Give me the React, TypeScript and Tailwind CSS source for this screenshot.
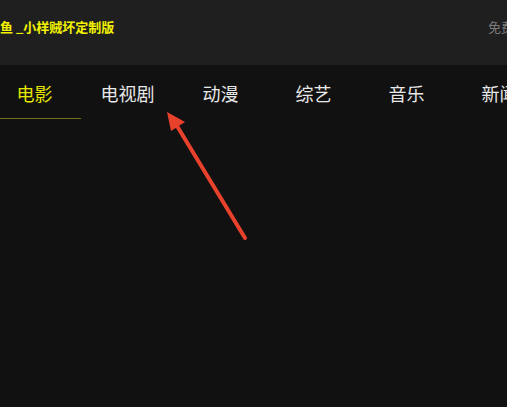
import React from "react";

const tabs = ["电影", "电视剧", "动漫", "综艺", "音乐", "新闻"];

export default function App() {
  return (
    <div
      className="relative w-[507px] h-[407px] overflow-hidden bg-[#111111]"
      style={{ fontFamily: '"Noto Sans CJK SC", "Noto Sans", sans-serif' }}
    >
      <div className="h-[65px] bg-[#1f1f1f] flex items-center justify-between pb-[12px]">
        <div className="text-[13px] font-bold text-[#f2f200] leading-none whitespace-nowrap">
          鱼 _小样贼坏定制版
        </div>
        <div className="text-[13px] text-[#7a7a7a] leading-none whitespace-nowrap mr-[-7px]">
          免费
        </div>
      </div>
      <div className="flex ml-[-12px]">
        {tabs.map((t, i) => (
          <div
            key={t}
            className={
              "shrink-0 w-[93px] h-[54px] flex items-center justify-center pt-[3px] text-[18px] whitespace-nowrap " +
              (i === 0
                ? "text-[#e6e600] border-b border-[#707018]"
                : "text-[#e8e8e8]")
            }
          >
            {t}
          </div>
        ))}
      </div>
      <svg
        className="absolute left-0 top-0 pointer-events-none"
        width="507"
        height="407"
        viewBox="0 0 507 407"
      >
        <line
          x1="245"
          y1="238"
          x2="174"
          y2="121"
          stroke="#e8412c"
          strokeWidth="4"
          strokeLinecap="round"
        />
        <polygon points="167,112 185,122 171,131" fill="#e8412c" />
      </svg>
    </div>
  );
}
